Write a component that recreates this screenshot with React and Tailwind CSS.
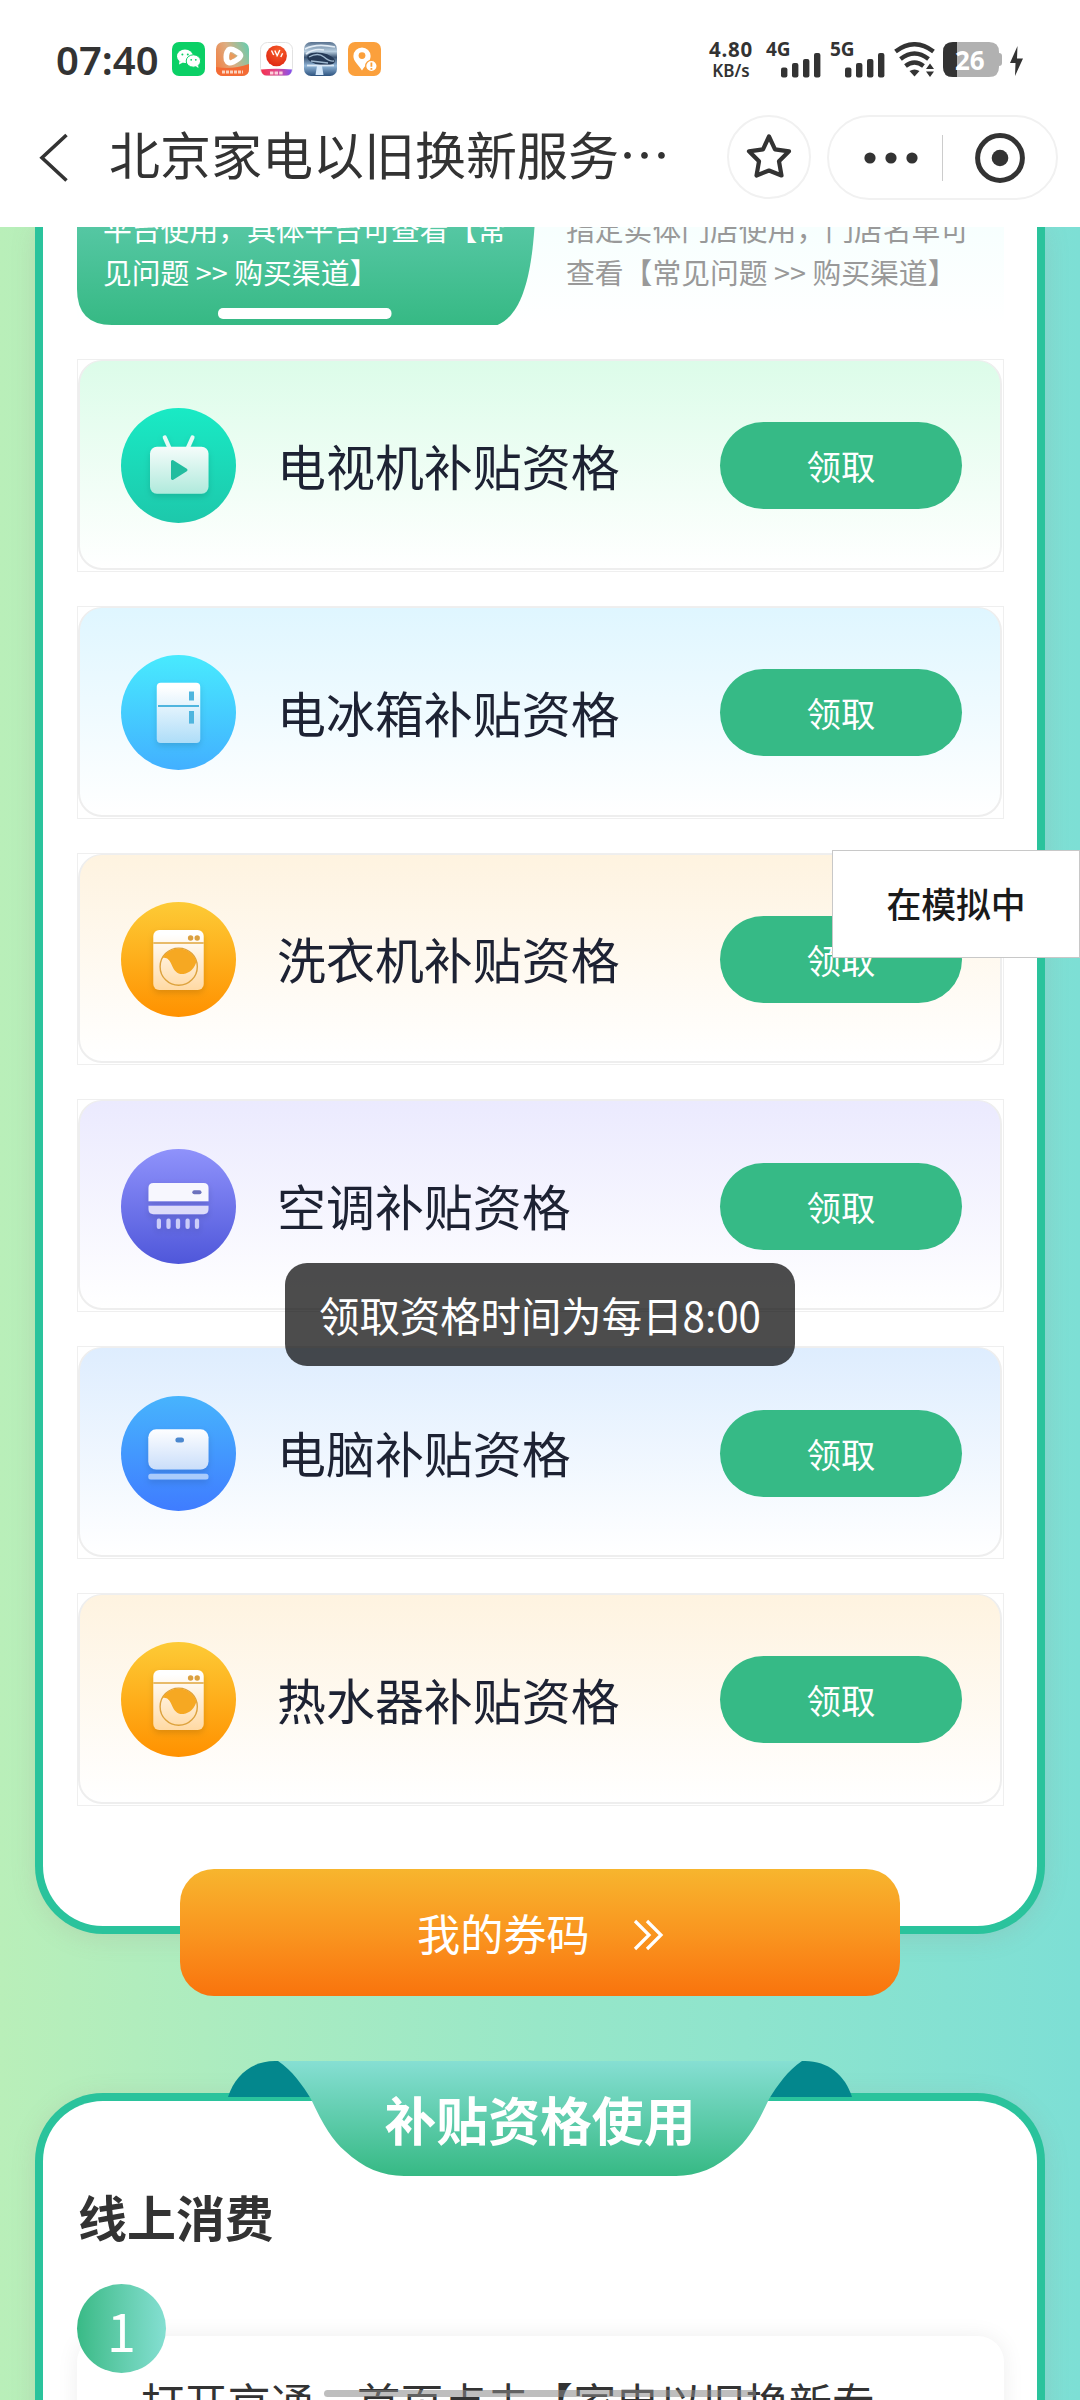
import { useState } from "react";

const TITLE = "北京家电以旧换新服务…";

function StatusApps() {
  return (
    <div className="flex gap-[11px]">
      {/* WeChat */}
      <svg width="33" height="34" viewBox="0 0 33 34">
        <rect width="33" height="34" rx="7" fill="#0bd066" />
        <ellipse cx="13" cy="14.2" rx="8" ry="6.8" fill="#fff" />
        <path d="M7.5 19 L7 22.5 L11 20.5 Z" fill="#fff" />
        <ellipse cx="21.4" cy="19" rx="7.2" ry="6.2" fill="#fff" stroke="#0bd066" strokeWidth="1" />
        <path d="M24 24.5 L26.5 26 L26 23 Z" fill="#fff" />
        <circle cx="10.4" cy="12.4" r="1" fill="#0bd066" />
        <circle cx="15.8" cy="12.4" r="1" fill="#0bd066" />
        <circle cx="19.2" cy="17.8" r=".9" fill="#0bd066" />
        <circle cx="23.8" cy="17.8" r=".9" fill="#0bd066" />
      </svg>
      {/* video */}
      <svg width="33" height="34" viewBox="0 0 33 34">
        <defs>
          <linearGradient id="vid" x1="0" y1=".6" x2="1" y2=".2">
            <stop offset="0" stopColor="#f0854a" />
            <stop offset=".45" stopColor="#dcae83" />
            <stop offset="1" stopColor="#6ccbac" />
          </linearGradient>
        </defs>
        <rect width="33" height="34" rx="7" fill="url(#vid)" />
        <path d="M0 25 Q16 28 33 22 V27 Q33 34 26 34 H7 Q0 34 0 27 Z" fill="#f46b35" />
        <path d="M12.500 8 Q15 6 19.500 9 Q25 12 24.500 14 Q23.500 17 17 20 Q12 22 10.500 18 Q9.500 11.500 12.500 8 Z" fill="none" stroke="#fff" strokeWidth="5.500" strokeLinejoin="round" />
        <path d="M14 10.500 L20.500 14 L14 18.500 Z" fill="#e99a5c" />
        <path d="M6 30 h21" stroke="#fbd3bf" strokeWidth="3" strokeDasharray="3 1" />
      </svg>
      {/* red ball */}
      <svg width="33" height="34" viewBox="0 0 33 34">
        <defs>
          <linearGradient id="strip" x1="0" y1="0" x2="1" y2="0">
            <stop offset="0" stopColor="#f4304c" />
            <stop offset=".5" stopColor="#e04a90" />
            <stop offset="1" stopColor="#8150f0" />
          </linearGradient>
          <radialGradient id="ball" cx=".6" cy=".3" r=".7">
            <stop offset="0" stopColor="#f8602a" />
            <stop offset="1" stopColor="#e02a14" />
          </radialGradient>
        </defs>
        <rect x=".5" y=".5" width="32" height="33" rx="7" fill="#fff" stroke="#e2e2e2" />
        <circle cx="16.5" cy="13.8" r="10.4" fill="url(#ball)" />
        <path d="M11.500 8.500 l2.200 4.500 M14.800 8.500 l2 4.500 M16.800 14.500 l3 -6.500 M20.800 15 l1.800 -3.800" stroke="#fff" strokeWidth="1.400" />
        <path d="M1 27.5 Q16 26 32 27.5 Q31.5 33.5 26 33.5 H7 Q1.500 33.5 1 27.5 Z" fill="url(#strip)" />
        <path d="M10 31 h13" stroke="#fbd0dc" strokeWidth="3.2" strokeDasharray="3.4 1.2" />
      </svg>
      {/* game artwork */}
      <svg width="33" height="34" viewBox="0 0 33 34">
        <defs>
          <linearGradient id="sky" x1="0" y1="0" x2="0" y2="1">
            <stop offset="0" stopColor="#5a7390" />
            <stop offset=".28" stopColor="#b8cee0" />
            <stop offset=".45" stopColor="#3d5675" />
            <stop offset=".7" stopColor="#8fb4d6" />
            <stop offset="1" stopColor="#2c527f" />
          </linearGradient>
        </defs>
        <rect width="33" height="34" rx="7" fill="url(#sky)" />
        <path d="M1 7 Q12 1 31 5 M2 12 Q10 6 20 8" stroke="#e3edf6" strokeWidth="1.6" fill="none" />
        <ellipse cx="17" cy="17" rx="14" ry="6" fill="#253a57" transform="rotate(10 17 17)" />
        <path d="M5 15 Q14 10 20 15 T30 19 M7 19 Q16 20 24 21" stroke="#9fb8cf" strokeWidth="1.4" fill="none" />
        <path d="M3 23.500 H30" stroke="#dbe9f6" strokeWidth="1.8" />
        <path d="M13 24 h5 l1.500 9 h-8 z" fill="#d5e8fa" />
      </svg>
      {/* location */}
      <svg width="33" height="34" viewBox="0 0 33 34">
        <rect width="33" height="34" rx="7" fill="#fba03c" />
        <path d="M14 5.500 a8.600 8.600 0 0 1 8.600 8.600 c0 5 -4 7.500 -8.600 14.500 c-4.600 -7 -8.600 -9.500 -8.600 -14.500 a8.600 8.600 0 0 1 8.600 -8.600 Z" fill="#fff" />
        <circle cx="14" cy="13.6" r="3.400" fill="#fba03c" />
        <circle cx="23.4" cy="24" r="5.700" fill="#fff" stroke="#fba03c" strokeWidth="1.2" />
        <path d="M23.4 20.500 v4.200 M23.4 26 v1.700" stroke="#fba03c" strokeWidth="1.800" />
      </svg>
    </div>
  );
}

function Signal({ label }) {
  return (
    <div className="flex h-[36px] w-[54px] items-start">
      <span className="-mt-[3px] -ml-px w-[15px] text-[19px] leading-[20px] font-bold whitespace-nowrap">{label}</span>
      <svg className="mt-[10px] shrink-0" width="40" height="26" viewBox="0 0 40 26">
        <rect x="0" y="15.500" width="6.400" height="10" rx="2" fill="#333" />
        <rect x="11" y="11" width="6.400" height="14.500" rx="2" fill="#333" />
        <rect x="22" y="7" width="6.400" height="18.500" rx="2" fill="#333" />
        <rect x="33" y="1" width="6.400" height="24.500" rx="2" fill="#333" />
      </svg>
    </div>
  );
}

function StatusBar() {
  return (
    <div className="flex h-[100px] items-start justify-between pt-[42px] pr-[57px] pl-[56px] text-[#333]">
      <div className="flex items-start">
        <span className="-mt-[8px] w-[116px] text-[40px] leading-[52px] font-semibold whitespace-nowrap">07:40</span>
        <StatusApps />
      </div>
      <div className="flex items-start">
        <div className="-mt-[4px] flex w-[46px] flex-col items-center font-bold">
          <span className="text-[20.500px] leading-[22px] tracking-[0.800px]">4.80</span>
          <span className="text-[17px] leading-[22px] font-semibold">KB/s</span>
        </div>
        <div className="ml-[13px]">
          <Signal label="4G" />
        </div>
        <div className="ml-[10px]">
          <Signal label="5G" />
        </div>
        <svg className="ml-[9px]" width="42" height="36" viewBox="0 0 42 36" fill="none" stroke="#333" strokeWidth="4.400">
          <path d="M1.500 9.500 Q20.500 -5 39.500 9.500" />
          <path d="M6.500 17 Q20.500 6 34.500 17" />
          <path d="M11.500 24 Q20.500 17 29.500 24" />
          <path d="M15.500 29 Q20.500 26 25.500 29 L20.500 34.500 Z" fill="#333" stroke="none" />
          <path d="M32 27 L36 21.500 L40 27 Z M32 29.500 L36 35 L40 29.500 Z" fill="#333" stroke="none" />
        </svg>
        <div className="relative ml-[7px] h-[35px] w-[60px]">
          <svg width="60" height="35" viewBox="0 0 60 35">
            <path d="M10 0 H46 Q56 0 56 10 V11 Q59 11 59 14 V21 Q59 24 56 24 V25 Q56 35 46 35 H10 Q0 35 0 25 V10 Q0 0 10 0 Z" fill="#b1b1b1" />
            <path d="M14 0 H10 Q0 0 0 10 V25 Q0 35 10 35 H14 Z" fill="#333" />
          </svg>
          <span className="absolute top-0 left-[12px] text-[26px] leading-[36px] font-bold text-white">26</span>
        </div>
        <svg className="ml-[7px]" width="13" height="36" viewBox="0 0 13 36">
          <path d="M7.500 4 L0 21 H5.500 L5 34 L13 16.500 H7 Z" fill="#333" />
        </svg>
      </div>
    </div>
  );
}

function NavBar() {
  return (
    <div className="flex h-[127px] items-start pt-[15px] pl-[38px]">
      <svg className="mt-[16px]" width="32" height="54" viewBox="0 0 32 54" fill="none" stroke="#333" strokeWidth="3.600">
        <path d="M28.500 4 L4 26.700 L28.500 49.500" />
      </svg>
      <h1 className="ml-[39px] w-[618px] text-[51px] leading-[77px] whitespace-nowrap text-[#333]">{TITLE}</h1>
      <button className="flex h-[84px] w-[84px] items-center justify-center rounded-full border-2 border-[#f1f1f1]">
        <svg width="50" height="50" viewBox="0 0 50 50" fill="none" stroke="#333" strokeWidth="4.200" strokeLinejoin="round">
          <path d="M25 4.500 L31 17.300 L45 19.300 L35 29.300 L37.500 43.500 L25 38.500 L12.500 43.500 L15 29.300 L5 19.300 L19 17.300 Z" />
        </svg>
      </button>
      <div className="ml-[16px] flex h-[85px] w-[231px] items-center rounded-full border-2 border-[#f1f1f1] pl-[34px]">
        <svg className="shrink-0" width="56" height="14" viewBox="0 0 56 14" fill="#333">
          <circle cx="7" cy="7" r="5.600" />
          <circle cx="28" cy="7" r="5.600" />
          <circle cx="49" cy="7" r="5.600" />
        </svg>
        <div className="ml-[23px] h-[46px] w-px bg-[#ccc]" />
        <svg className="ml-[31px] shrink-0" width="52" height="52" viewBox="0 0 52 52">
          <circle cx="26" cy="26" r="22.400" fill="none" stroke="#333" strokeWidth="5" />
          <circle cx="26" cy="26" r="8.300" fill="#333" />
        </svg>
      </div>
    </div>
  );
}

// Fondo circular con degradado + brillo blanco del aparato
function IconBase({ id, from, to, tint, children }) {
  return (
    <svg className="shrink-0" width="115" height="115" viewBox="0 0 115 115">
      <defs>
        <linearGradient id={`${id}-bg`} x1="0" y1="0" x2="0" y2="1">
          <stop offset="0" stopColor={from} />
          <stop offset="1" stopColor={to} />
        </linearGradient>
        <linearGradient id={`${id}-fg`} gradientUnits="userSpaceOnUse" x1="0" y1="32" x2="0" y2="90">
          <stop offset="0" stopColor="#fff" />
          <stop offset="1" stopColor={tint} />
        </linearGradient>
        <filter id={`${id}-sh`} x="-30%" y="-30%" width="160%" height="160%">
          <feDropShadow dx="0" dy="3" stdDeviation="3" floodColor="#000" floodOpacity=".13" />
        </filter>
      </defs>
      <circle cx="57.500" cy="57.500" r="57.500" fill={`url(#${id}-bg)`} />
      <g filter={`url(#${id}-sh)`}>{children}</g>
    </svg>
  );
}

function TvIcon({ id }) {
  return (
    <IconBase id={id} from="#19eac5" to="#1dc8ab" tint="#a9e8d9">
      <path d="M43.800 29.500 L48.500 40 M71.500 29.500 L66.800 40" stroke="#e6fbf6" strokeWidth="4.200" strokeLinecap="round" />
      <rect x="29" y="38.700" width="58.500" height="47" rx="7" fill={`url(#${id}-fg)`} />
      <path d="M51.500 53.500 L65 62 L51.500 70.500 Z" fill="#22bd9f" stroke="#22bd9f" strokeWidth="3" strokeLinejoin="round" />
    </IconBase>
  );
}

function FridgeIcon({ id }) {
  return (
    <IconBase id={id} from="#48eafe" to="#42b0ff" tint="#abdcf8">
      <rect x="35.800" y="27.700" width="43.400" height="60.300" rx="4" fill={`url(#${id}-fg)`} />
      <path d="M37 51 H78" stroke="#50b5de" strokeWidth="2" />
      <rect x="68" y="36.500" width="5" height="9" fill="#50b5de" />
      <rect x="68" y="56" width="5" height="12.600" fill="#50b5de" />
    </IconBase>
  );
}

function WasherIcon({ id }) {
  return (
    <IconBase id={id} from="#fdcb36" to="#ff9100" tint="#ffd8a0">
      <rect x="32.300" y="28" width="50.400" height="60" rx="6" fill={`url(#${id}-fg)`} />
      <path d="M32.300 41 H82.700" stroke="#e0a63c" strokeWidth="1.500" />
      <circle cx="69.600" cy="36" r="2.700" fill="#dba040" />
      <circle cx="76.200" cy="36" r="2.700" fill="#dba040" />
      <circle cx="57.700" cy="64.700" r="18.600" fill="none" stroke="#dda23c" strokeWidth="1.400" />
      <path d="M41.500 56 C46 55 48.500 58 50.500 62.500 C53 69 57 72.800 62.500 72 C69 71 73.500 66.500 75.500 59.500 A18.600 18.600 0 0 0 41.500 56 Z" fill="#f6a823" />
    </IconBase>
  );
}

function AirIcon({ id }) {
  return (
    <IconBase id={id} from="#8f92fb" to="#4f57da" tint="#cfcff6">
      <path d="M32.500 34 H82.500 Q87.500 34 87.500 39 V52.300 H27.500 V39 Q27.500 34 32.500 34 Z" fill="#f7f7fe" />
      <path d="M27.500 56.700 H87.500 V60 Q87.500 65.200 82.500 65.200 H32.500 Q27.500 65.200 27.500 60 Z" fill="#dddcf9" />
      <rect x="71.300" y="41.200" width="9.200" height="4" rx="2" fill="#6c72bd" />
      <path d="M37.900 71.500 V78 M47.500 71.500 V78 M57 71.500 V78 M66.600 71.500 V78 M76 71.500 V78" stroke="#cbcdf8" strokeWidth="4.200" strokeLinecap="round" />
    </IconBase>
  );
}

function ComputerIcon({ id }) {
  return (
    <IconBase id={id} from="#47b4fd" to="#3f7cff" tint="#b5d1f8">
      <rect x="27.300" y="33.300" width="60.200" height="40.200" rx="8" fill={`url(#${id}-fg)`} />
      <rect x="54.400" y="41.400" width="8.600" height="5" rx="2.500" fill="#4b88cf" />
      <rect x="27.300" y="77.700" width="60.200" height="5.800" rx="2.500" fill="#a9cbfb" />
    </IconBase>
  );
}

const items = [
  { id: "tv", name: "电视机补贴资格", icon: TvIcon, bg: "from-[#dcfce9]" },
  { id: "fridge", name: "电冰箱补贴资格", icon: FridgeIcon, bg: "from-[#dff6ff]" },
  { id: "washer", name: "洗衣机补贴资格", icon: WasherIcon, bg: "from-[#fef3e0]" },
  { id: "air", name: "空调补贴资格", icon: AirIcon, bg: "from-[#ebeafe]" },
  { id: "pc", name: "电脑补贴资格", icon: ComputerIcon, bg: "from-[#deedfe]" },
  { id: "heater", name: "热水器补贴资格", icon: WasherIcon, bg: "from-[#fef3e0]" },
];

function ItemRow({ item, onClaim }) {
  const Icon = item.icon;
  return (
    <div className="h-[212.800px] border border-[#efefef] pr-px pb-px">
      <div className={`flex h-full items-center rounded-[24px] border-2 border-t-1 border-[#eee] bg-linear-to-b to-white pt-[3px] pr-[38px] pl-[41px] ${item.bg}`}>
        <Icon id={item.id} />
        <span className="ml-[41px] flex-1 pb-[2px] text-[48.950px] leading-[70px] whitespace-nowrap text-[#1d2233]">{item.name}</span>
        <button className="h-[87px] w-[242px] rounded-full bg-[#36ba86] text-[34.400px] leading-[87px] text-white" onClick={onClaim}>
          领取
        </button>
      </div>
    </div>
  );
}

function Channels() {
  return (
    <div className="relative flex h-[98px] items-end overflow-hidden bg-linear-to-b from-[#f7fffe] to-white pb-[32px] text-[28.800px] leading-[43.200px]">
      <svg className="absolute top-0 left-0" width="460" height="98" viewBox="0 0 460 98">
        <defs>
          <linearGradient id="tab" x1="0" y1="0" x2="0" y2="1">
            <stop offset="0" stopColor="#55c7a3" />
            <stop offset="1" stopColor="#36b984" />
          </linearGradient>
        </defs>
        <path d="M0 0 H457.500 C454 52 444 88 420.500 98 H35 Q0 98 0 62 Z" fill="url(#tab)" />
        <rect x="141" y="81" width="173.500" height="11" rx="5" fill="#fff" />
      </svg>
      <p className="relative w-[463px] pl-[26px] whitespace-nowrap text-white">
        平台使用，具体平台可查看【常
        <br />
        见问题 &gt;&gt; 购买渠道】
      </p>
      <p className="relative pl-[26px] whitespace-nowrap text-[#999]">
        指定实体门店使用，门店名单可
        <br />
        查看【常见问题 &gt;&gt; 购买渠道】
      </p>
    </div>
  );
}

function Ribbon() {
  return (
    <div className="relative z-10 mx-auto h-[115px] w-[624px]">
      <svg className="absolute inset-0" width="624" height="115" viewBox="0 0 624 115">
        <defs>
          <linearGradient id="rib" x1="0" y1="0" x2="0" y2="1">
            <stop offset="0" stopColor="#86dfd3" />
            <stop offset="1" stopColor="#36b984" />
          </linearGradient>
        </defs>
        <path d="M0 36 C7 14 24 0 47 0 H60 L90 36 Z" fill="#03878d" />
        <path d="M624 36 C617 14 600 0 577 0 H564 L534 36 Z" fill="#03878d" />
        <path d="M50 0 C64 9 75 25 83 38 C95 64 105 80 117 90 C135 107 155 115 176 115 H448 C469 115 489 107 507 90 C519 80 529 64 541 38 C549 25 560 9 574 0 Z" fill="url(#rib)" />
      </svg>
      <h2 className="relative text-center text-[51.840px] leading-[115px] font-bold text-white">补贴资格使用</h2>
    </div>
  );
}

export default function App() {
  const [toast, setToast] = useState("领取资格时间为每日8:00");

  const handleClaim = () => setToast("领取资格时间为每日8:00");

  return (
    <div
      lang="zh-CN"
      className="relative h-[2400px] w-[1080px] overflow-hidden bg-linear-to-r from-[#b9efb9] via-[#98e7c8] to-[#7ddfd5] font-['Noto_Sans_CJK_SC',sans-serif]"
    >
      <header className="relative h-[227px] bg-white">
        <div className="font-['Noto_Sans',sans-serif]">
          <StatusBar />
        </div>
        <NavBar />
      </header>

      <section className="mx-[35px] h-[1707px] rounded-b-[68px] border-8 border-t-0 border-[#2ac39c] bg-white pr-[33px] pl-[34px] shadow-[0_4px_24px_rgba(160,120,120,0.17)]">
        <Channels />
        <div className="mt-[34px] flex flex-col gap-[34px]">
          {items.map((item) => (
            <ItemRow key={item.id} item={item} onClaim={handleClaim} />
          ))}
        </div>
      </section>

      <button className="relative mx-auto -mt-[65px] flex h-[127px] w-[720px] items-center rounded-[34px] bg-linear-to-b from-[#f7b52e] to-[#f9730c] pb-px pl-[237px] text-[43.200px] text-white">
        我的券码
        <svg className="mt-[5px] ml-[42px]" width="34" height="32" viewBox="0 0 34 32" fill="none" stroke="#fff" strokeWidth="3.200">
          <path d="M3 2 L17 16 L3 30 M15 2 L29 16 L15 30" />
        </svg>
      </button>

      <div className="mt-[65px]">
        <Ribbon />
      </div>

      <section className="mx-[35px] -mt-[83px] h-[500px] rounded-t-[68px] border-8 border-b-0 border-[#2ac39c] bg-white pt-[79px] pr-[33px] pl-[35px] shadow-[0_4px_24px_rgba(160,120,120,0.17)]">
        <h3 className="text-[48.960px] leading-[72px] font-bold text-[#333]">线上消费</h3>
        <div className="relative z-10 mt-[32px] -ml-px h-[89px] w-[89px] rounded-full bg-linear-to-r from-[#38ba86] to-[#84dfd2] text-center text-[52px] leading-[91px] text-white">
          1
        </div>
        <div className="-mt-[37px] -ml-px h-[200px] rounded-[26px] bg-white pt-[33px] pl-[64px] shadow-[0_0_22px_rgba(0,0,0,0.07)]">
          <p className="text-[43.200px] leading-[64px] whitespace-nowrap text-[#333]">打开京通，首页点击【家电以旧换新专</p>
        </div>
      </section>

      {/* etiqueta flotante */}
      <div className="absolute top-[850px] right-0 z-20 h-[108px] w-[248px] border border-[#c8c8c8] bg-white text-center text-[34.800px] leading-[105px] font-medium text-[#1a1a1a]">
        在模拟中
      </div>

      {toast && (
        <div className="absolute top-[1263px] left-[285px] z-20 h-[103px] w-[510px] rounded-[22px] bg-black/70 text-center text-[40.400px] leading-[103px] whitespace-nowrap text-white">
          {toast}
        </div>
      )}

      {/* home indicator */}
      <div className="absolute top-[2390px] left-[324px] z-20 h-[7px] w-[432px] rounded-full bg-[#888]/55" />
    </div>
  );
}
